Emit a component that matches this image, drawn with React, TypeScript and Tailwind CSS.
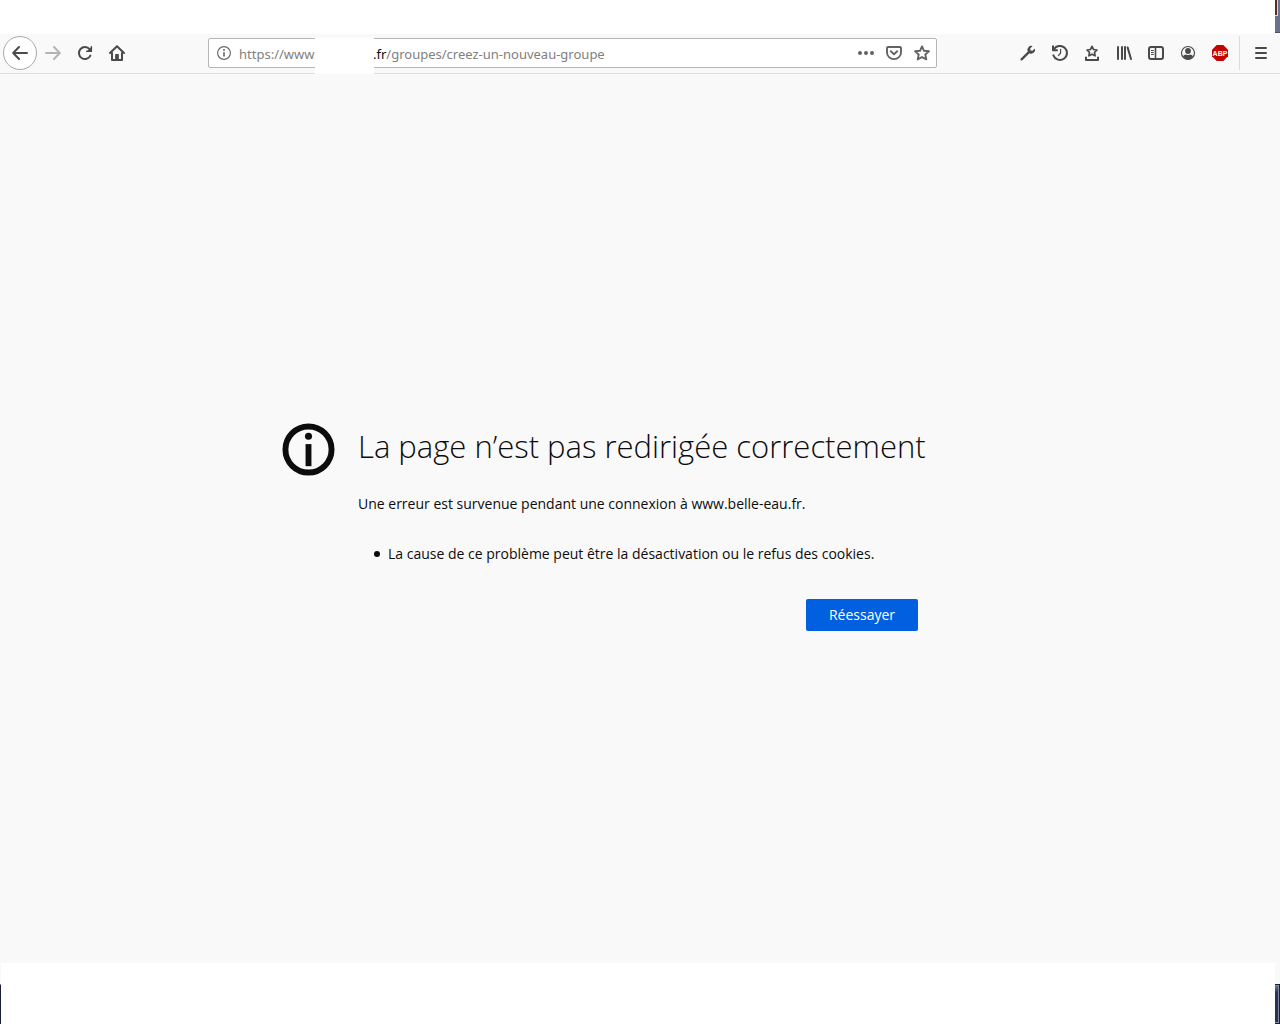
import { useState } from "react";
import type { ReactNode } from "react";

type IconButtonProps = {
  label: string;
  className?: string;
  disabled?: boolean;
  children: ReactNode;
};

function IconButton({ label, className = "w-8", disabled = false, children }: IconButtonProps) {
  return (
    <button
      type="button"
      aria-label={label}
      disabled={disabled}
      className={`flex h-8 shrink-0 items-center justify-center ${className}`}
    >
      {children}
    </button>
  );
}

function Icon({ children }: { children: ReactNode }) {
  return (
    <svg
      viewBox="0 0 16 16"
      className="size-4"
      fill="none"
      stroke="currentColor"
      strokeWidth="2"
      strokeLinecap="round"
      strokeLinejoin="round"
      aria-hidden="true"
    >
      {children}
    </svg>
  );
}

const tools = [
  {
    label: "Outils de développement",
    icon: (
      <Icon>
        <path d="M1.6 14.4 8.4 7.6" strokeWidth="2.3" />
        <path
          d="M12.6 1.1a4 4 0 0 0-5 5.2L9.7 8.4a4 4 0 0 0 5.2-5L12.4 5.8 10.5 5.4 10.2 3.5Z"
          fill="currentColor"
          stroke="none"
        />
      </Icon>
    ),
  },
  {
    label: "Historique",
    icon: (
      <Icon>
        <path d="M1.8 4.6A7 7 0 1 1 1.4 10.4" />
        <path d="M1 1.2V5.2H5" />
        <path d="M8.6 4.4V8L6.4 10.6" strokeWidth="1.2" />
      </Icon>
    ),
  },
  {
    label: "Marque-pages",
    icon: (
      <Icon>
        <path d="M8 1.3 9.6 4.5 13 5 10.5 7.4 11.1 10.8 8 9.2 4.9 10.8 5.5 7.4 3 5 6.4 4.5Z" strokeWidth="1.7" />
        <path d="M2 12.5V15H14V12.5" />
      </Icon>
    ),
  },
  {
    label: "Bibliothèque",
    icon: (
      <Icon>
        <path d="M2 2V14M6 2V14M9 2V14M11.6 2.4 15 14" />
      </Icon>
    ),
  },
  {
    label: "Panneau latéral",
    icon: (
      <Icon>
        <rect x="1" y="2" width="14" height="12" rx="2" />
        <path d="M7.5 2V14" strokeWidth="1.6" />
        <path d="M3.4 5.5H5.4M3.4 7.5H5.4M3.4 9.5H5.4" strokeWidth="1" />
      </Icon>
    ),
  },
  {
    label: "Compte",
    icon: (
      <Icon>
        <circle cx="8" cy="8" r="6.5" strokeWidth="1.2" />
        <circle cx="8" cy="6" r="2.9" fill="currentColor" stroke="none" />
        <path
          d="M3 11.2C4.2 9.6 5.2 9.6 6 9.4 7.2 10.2 8.8 10.2 10 9.4 10.8 9.6 11.8 9.6 13 11.2A5.6 5.6 0 0 1 3 11.2Z"
          fill="currentColor"
          stroke="none"
        />
      </Icon>
    ),
  },
  {
    label: "Adblock Plus",
    icon: (
      <svg viewBox="0 0 16 16" className="size-4" aria-hidden="true">
        <path d="M4.7 0H11.3L16 4.7V11.3L11.3 16H4.7L0 11.3V4.7Z" fill="#c70000" />
        <text
          x="8"
          y="11"
          textAnchor="middle"
          fill="#fff"
          fontSize="7"
          fontWeight="700"
          fontFamily="Liberation Sans, sans-serif"
        >
          ABP
        </text>
      </svg>
    ),
  },
];

function AddressBar() {
  const [path, setPath] = useState("/groupes/creez-un-nouveau-groupe");

  return (
    <div className="relative mx-[75px] flex h-[30px] min-w-0 flex-1 items-center rounded-xs border border-[#b6b6b6] bg-white">
      <IconButton label="Informations sur le site" className="w-[30px]">
        <svg viewBox="0 0 16 16" className="size-4 text-[#6a6a6a]" fill="none" stroke="currentColor" aria-hidden="true">
          <circle cx="8" cy="8" r="6.4" strokeWidth="1.2" />
          <path d="M8 7.2V11.4" strokeWidth="1.7" />
          <circle cx="8" cy="5" r="1" fill="currentColor" stroke="none" />
        </svg>
      </IconButton>
      <div className="flex min-w-0 flex-1 pt-px font-['Noto_Sans',sans-serif] text-[13px] leading-5 text-[#808080]">
        <span className="w-[134px] shrink-0">https://www.</span>
        <span className="text-[#0c0c0d]">.fr</span>
        <input
          aria-label="Adresse"
          value={path}
          onChange={(e) => setPath(e.target.value)}
          className="min-w-0 flex-1 bg-transparent outline-none"
        />
      </div>
      <div className="absolute -top-px left-[106px] h-9 w-[59px] bg-white" />
      <div className="flex shrink-0 text-[#636363]">
        <IconButton label="Actions de la page" className="w-7">
          <svg viewBox="0 0 16 16" className="size-4" fill="currentColor" aria-hidden="true">
            <circle cx="2" cy="8" r="2" />
            <circle cx="8" cy="8" r="2" />
            <circle cx="14" cy="8" r="2" />
          </svg>
        </IconButton>
        <IconButton label="Enregistrer dans Pocket" className="w-7">
          <Icon>
            <path d="M2 2H14Q15 2 15 3V7.5A7 6.6 0 0 1 1 7.5V3Q1 2 2 2Z" strokeWidth="1.9" />
            <path d="M4.8 6.2 8 9.2 11.2 6.2" strokeWidth="1.9" />
          </Icon>
        </IconButton>
        <IconButton label="Marquer cette page" className="w-7">
          <Icon>
            <path d="M8 1.4 10 5.8 14.9 6.3 11.3 9.5 12.3 14.4 8 12 3.7 14.4 4.7 9.5 1.1 6.3 6 5.8Z" strokeWidth="1.9" />
          </Icon>
        </IconButton>
      </div>
    </div>
  );
}

function Toolbar() {
  return (
    <header className="flex h-10 shrink-0 items-center border-b border-[#dedede] bg-[#f9f9fa] px-[3px] pb-px text-[#4a4a4b]">
      <button
        type="button"
        aria-label="Page précédente"
        className="flex size-[34px] shrink-0 items-center justify-center rounded-full border border-[#a9a9a9] bg-white"
      >
        <Icon>
          <path d="M15 8H1.4M7 2 1.2 8 7 14" />
        </Icon>
      </button>
      <IconButton label="Page suivante" disabled className="w-8 text-[#b4b4b4]">
        <Icon>
          <path d="M1 8H14.6M9 2 14.8 8 9 14" />
        </Icon>
      </IconButton>
      <IconButton label="Actualiser">
        <Icon>
          <path d="M13.4 10.6A6 6 0 1 1 12.6 4.2" />
          <path d="M15 1.2V7H9.2Z" fill="currentColor" stroke="none" />
          <path d="M14.4 1.6V6.2H9.8" strokeWidth="1.4" />
        </Icon>
      </IconButton>
      <IconButton label="Accueil">
        <Icon>
          <path d="M1 8 8 1.2 15 8" />
          <path d="M3 8V15H13V8" />
          <path d="M6.8 14.5V9.6H9.2V14.5" fill="currentColor" strokeWidth="1.2" />
        </Icon>
      </IconButton>

      <AddressBar />

      {tools.map((tool) => (
        <IconButton key={tool.label} label={tool.label}>
          {tool.icon}
        </IconButton>
      ))}
      <div className="mr-[5px] ml-[3px] h-[34px] w-px shrink-0 bg-[#dcdcdc]" />
      <IconButton label="Menu">
        <Icon>
          <path d="M3 3H13M3 8H13M3 13H13" />
        </Icon>
      </IconButton>
    </header>
  );
}

function ErrorPage() {
  return (
    <main className="flex flex-1 items-center justify-center pt-4 text-[#0c0c0d]">
      <div className="flex gap-[23px] pr-20">
        <svg viewBox="0 0 54 54" className="size-[53px] shrink-0" aria-hidden="true">
          <circle cx="27" cy="27" r="23.5" fill="none" stroke="currentColor" strokeWidth="6" />
          <circle cx="27" cy="13.5" r="3.6" fill="currentColor" />
          <path d="M24 21.5H30V44H24Z" fill="currentColor" />
        </svg>
        <div className="w-[560px] text-sm">
          <h1 className="text-[31px] leading-[46px] font-light whitespace-nowrap">
            La page n’est pas redirigée correctement
          </h1>
          <p className="mt-[23px] leading-6">
            Une erreur est survenue pendant une connexion à www.belle-eau.fr.
          </p>
          <ul className="mt-[26px] pl-4 leading-6">
            <li className="flex items-center gap-2 before:size-[6px] before:rounded-full before:bg-[#0c0c0d]">
              La cause de ce problème peut être la désactivation ou le refus des cookies.
            </li>
          </ul>
          <div className="mt-[33px] flex justify-end">
            <button type="button" className="h-8 w-28 rounded-xs bg-[#0060df] text-white">
              Réessayer
            </button>
          </div>
        </div>
      </div>
    </main>
  );
}

export default function App() {
  return (
    <div className="flex min-h-screen flex-col bg-[#f9f9f9] font-['Open_Sans','Noto_Sans',sans-serif]">
      {/* slivers of the desktop show on the right of the window */}
      <div className="flex h-[34px] shrink-0 justify-end bg-white">
        <div className="h-[33px] w-[5px] border-b border-[#4a4c68] bg-[#69738f]">
          <div className="h-4 w-[3px] border-r border-b border-[#d8d8e0] bg-[#5a2a2a]" />
        </div>
      </div>
      <Toolbar />
      <ErrorPage />
      <footer className="flex h-[61px] shrink-0 items-end">
        <div className="h-10 w-px border-t border-[#8b90a5] bg-[#161d3d]" />
        <div className="h-full flex-1 bg-white" />
        <div className="h-10 w-[5px] bg-[#161d3d] pt-px">
          <div className="h-[38px] w-1 border-y border-r border-[#858ba3] bg-linear-to-b from-[#6b6f80] via-[#27315a] via-20% to-[#27315a]" />
        </div>
      </footer>
    </div>
  );
}
